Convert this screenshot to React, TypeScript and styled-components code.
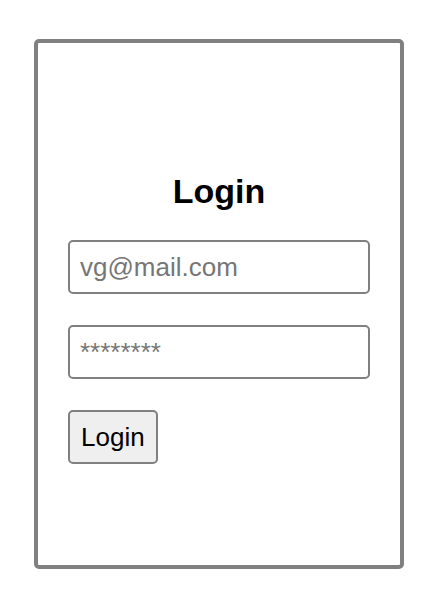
import React from 'react';
import styled, { createGlobalStyle } from 'styled-components';

const GlobalStyle = createGlobalStyle`
  body {
    margin: 0;
    background: #fff;
    font-family: "Liberation Sans", Arial, Helvetica, sans-serif;
  }
`;

const Page = styled.div`
  padding: 39px 24px 0 34px;
`;

const Card = styled.form`
  box-sizing: border-box;
  width: 370px;
  height: 530px;
  border: 4px solid #808080;
  border-radius: 5px;
  padding: 130px 30px 0 30px;
  display: flex;
  flex-direction: column;
  gap: 31px;
`;

const Title = styled.h2`
  margin: 0;
  font-size: 34px;
  line-height: 36px;
  font-weight: 700;
  text-align: center;
  color: #000;
`;

const Field = styled.input`
  box-sizing: border-box;
  width: 100%;
  height: 54px;
  padding: 10px;
  border: 2px solid #808080;
  border-radius: 5px;
  font-family: inherit;
  font-size: 26px;
  color: #000;
  outline: none;

  &::placeholder {
    color: #767676;
  }
`;

const Button = styled.button`
  align-self: flex-start;
  box-sizing: border-box;
  height: 54px;
  padding: 0 11px;
  border: 2px solid #808080;
  border-radius: 5px;
  background: #efefef;
  font-family: inherit;
  font-size: 26px;
  color: #000;
  cursor: pointer;
`;

export default function App() {
  return (
    <Page>
      <GlobalStyle />
      <Card onSubmit={(e) => e.preventDefault()}>
        <Title>Login</Title>
        <Field type="email" placeholder="vg@mail.com" />
        <Field type="password" placeholder="********" />
        <Button type="submit">Login</Button>
      </Card>
    </Page>
  );
}
